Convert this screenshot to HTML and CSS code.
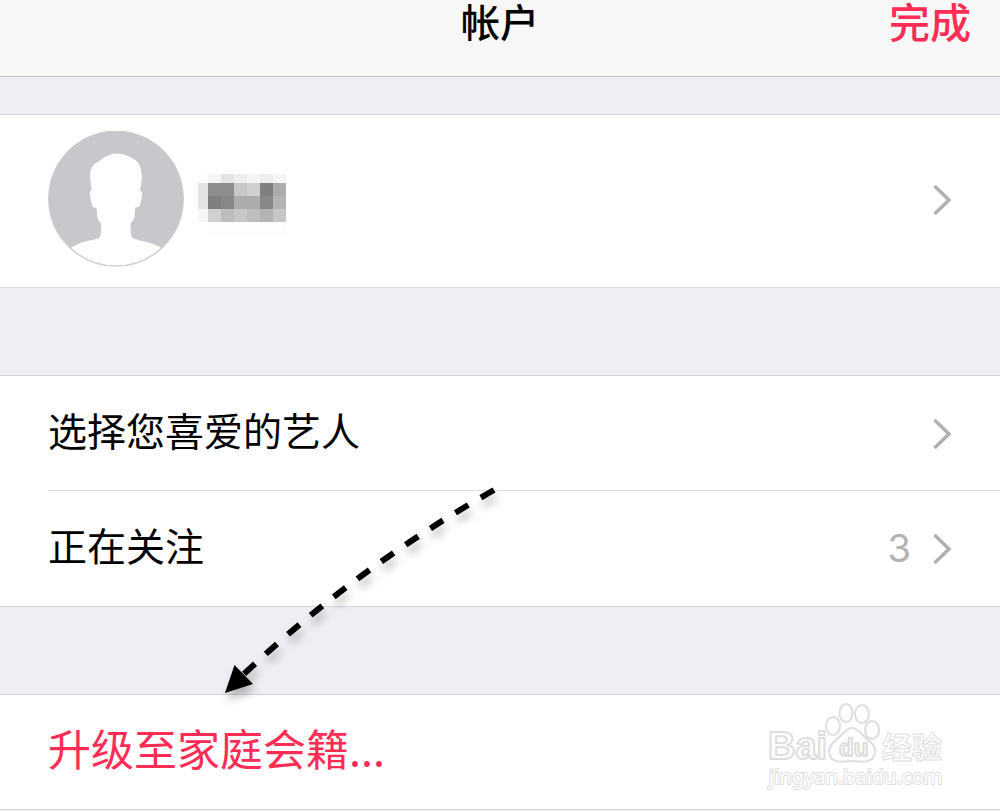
FILE: index.html
```html
<!DOCTYPE html>
<html lang="zh-CN">
<head>
<meta charset="UTF-8">
<meta name="viewport" content="width=device-width, initial-scale=1">
<title>帐户</title>
<link rel="stylesheet" href="styles.css">
</head>
<body>
<header class="navbar">
  <h1 class="title">帐户</h1>
  <button class="done" type="button">完成</button>
</header>

<main>
<section class="group">
  <a class="row profile" href="#" aria-label="个人资料">
    <svg class="avatar" viewBox="0 0 136 136">
      <circle cx="68" cy="68" r="67" fill="#fff" stroke="#d2d2d4" stroke-width="1.5"/>
      <path fill="#c8c7cc" d="M22.500 117A67.500 67.500 0 1 1 113.500 117C109 114 104 112.500 98.500 111C93 109.500 88 109 86 107.500C84 106.500 83 105.500 83 103.500L82.300 93C84 90.500 86 89 86.500 86C87 82 86.500 79 87.500 76.500L90.500 76C93 74 94 66 94 61.500C94 60.500 93 60 92 60C93 54 94 48 93.600 43C93 37 91.500 32.500 88 29.500C86 28 84 27 82 26C77 23.500 73 22.500 68 22.500C63 22.500 60 24.500 57 26C54 27.500 53 28.500 51 30.500C49 31.500 47 32 45.500 34C43 37 42.300 39.500 42.300 43C42.300 49 43 54.500 43.700 60C42.500 59.500 41.700 60 41.700 61.500C42 66 43 72 45 76C46 77 47 76.500 48.300 77C49.500 80 48.700 83 49.300 86C50 89 51.500 91 53.300 92.500L52.800 103C52.500 105.500 51.500 107 50 107.500C45 109 40 109.500 35.500 111C30.500 112.500 26 114.500 22.500 117Z"/>
    </svg>
    <svg class="mosaic" viewBox="0 -11 88 72" shape-rendering="crispEdges">
      <path fill="#fdfdfd" d="M0 0h10v9H0zM10 48h78v13H10z"/>
      <path fill="#f5f5f5" d="M10 0h13v9H10zM49 0h13v9H49zM75 0h13v9H75zM0 35h10v13H0z"/>
      <path fill="#eeeeee" d="M36 0h13v9H36zM62 0h13v9H62z"/>
      <path fill="#e4e4e4" d="M23 0h13v9H23zM0 9h10v26H0z"/>
      <path fill="#8d8d8d" d="M10 9h26v13H10z"/>
      <path fill="#c7c7c7" d="M36 9h13v13H36zM36 35h13v13H36zM75 35h13v13H75z"/>
      <path fill="#d0d0d0" d="M49 9h13v13H49zM10 35h13v13H10z"/>
      <path fill="#7f7f7f" d="M62 9h13v13H62zM10 22h13v13H10z"/>
      <path fill="#878787" d="M23 22h13v13H23zM62 22h13v13H62z"/>
      <path fill="#acacac" d="M75 9h13v13H75zM36 22h26v13H36z"/>
      <path fill="#b4b4b4" d="M75 22h13v13H75zM62 35h13v13H62z"/>
      <path fill="#bdbdbd" d="M23 35h13v13H23zM49 35h13v13H49z"/>
    </svg>
    <svg class="chevron" viewBox="0 0 20 32"><path d="M2.500 2L17 16L2.500 30"/></svg>
  </a>
</section>

<section class="group">
  <a class="row" href="#">
    <span class="label">选择您喜爱的艺人</span>
    <svg class="chevron" viewBox="0 0 20 32"><path d="M2.500 2L17 16L2.500 30"/></svg>
  </a>
  <a class="row inset" href="#">
    <span class="label">正在关注</span>
    <span class="count">3</span>
    <svg class="chevron" viewBox="0 0 20 32"><path d="M2.500 2L17 16L2.500 30"/></svg>
  </a>
</section>

<section class="group">
  <a class="row upgrade" href="#">
    <span class="label">升级至家庭会籍...</span>
  </a>
  <svg class="watermark" viewBox="0 0 190 100">
    <text class="wm-bai" x="3" y="58">Bai</text>
    <g class="wm-paw">
      <ellipse cx="32" cy="25" rx="7" ry="9"/>
      <ellipse cx="45" cy="12" rx="6.500" ry="9"/>
      <ellipse cx="61" cy="13" rx="7" ry="9"/>
      <ellipse cx="71" cy="29" rx="7" ry="9"/>
      <path d="M51 27C58 27 61 35 67 39C73 44 76 48 73 55C70 62 61 61 51 60C41 61 32 62 29 55C26 48 30 44 35 39C41 35 44 27 51 27Z"/>
    </g>
    <text class="wm-du" x="74" y="55">du</text>
    <text class="wm-cn" x="117" y="57">经验</text>
    <text class="wm-url" x="4" y="83">jingyan.baidu.com</text>
  </svg>
</section>
</main>

<svg class="arrow" viewBox="0 0 290 230">
  <path class="arrow-line" d="M284 10Q145 89 34 194"/>
  <path d="M15 213L24.500 185L43 204Z"/>
</svg>
</body>
</html>
```

FILE: styles.css
```css
*{box-sizing:border-box;}
body{
  position:relative;
  margin:0;
  background:#efeef4;
  color:#000;
  font-family:"Noto Sans CJK SC",sans-serif;
  font-size:39px;
}

/* top bar */
.navbar{
  display:grid;
  grid-template-columns:1fr auto 1fr;
  align-items:center;
  padding:0 29px 36px;
  background:#f7f7f7;
  border-bottom:1px solid #c4c4c6;
}
.title{
  grid-column:2;
  margin:0;
  font-size:39px;
  font-weight:500;
  line-height:40px;
}
.done{
  justify-self:end;
  padding:0;
  border:0;
  background:none;
  color:#ff2d55;
  font-family:inherit;
  font-size:41px;
  font-weight:500;
  line-height:40px;
}

/* lists */
.group{
  position:relative;
  margin-top:87px;
  background:#fff;
  border-top:1px solid #d4d3d9;
  border-bottom:1px solid #d9d8dd;
}
.group:first-child{margin-top:37px;}
.row{
  display:flex;
  align-items:center;
  padding:28px 48px;
  color:inherit;
  line-height:58px;
  text-decoration:none;
}
.label{
  flex:1;
  padding-bottom:8px;
  line-height:50px;
}
.inset{
  margin-left:48px;
  padding:28px 48px 29px 0;
  border-top:1px solid #dcdcde;
}
.profile{padding:16px 48px 20px;}
.avatar{width:136px;height:136px;}
.mosaic{width:88px;height:72px;margin-left:14px;}
.chevron{
  width:20px;
  height:32px;
  margin-top:2px;
  fill:none;
  stroke:#b0b0b0;
  stroke-width:3.5;
}
.profile .chevron{margin-left:auto;}
.count{
  margin-right:21px;
  color:#b2b2b2;
  font-family:Inter,sans-serif;
  font-size:38px;
}
.upgrade{
  padding:27px 48px 29px;
  color:#ff2d55;
  font-size:43px;
}

/* dashed pointer over the lists */
.arrow{
  position:absolute;
  top:480px;
  left:210px;
  width:290px;
  height:230px;
  pointer-events:none;
  overflow:visible;
  filter:drop-shadow(2px 7px 4px rgba(0,0,0,.25));
}
.arrow-line{
  fill:none;
  stroke:#000;
  stroke-width:6;
  stroke-dasharray:15 14.6;
}

.watermark{
  position:absolute;
  right:45px;
  bottom:8px;
  width:190px;
  height:100px;
  fill:#fff;
  stroke:#dedede;
  stroke-width:2;
  stroke-linejoin:round;
  pointer-events:none;
}
.wm-bai{font:bold 38px "Liberation Sans",sans-serif;}
.wm-du{font:bold 24px "Liberation Sans",sans-serif;}
.wm-cn{font:bold 30px "Noto Sans CJK SC",sans-serif;stroke-width:1;}
.wm-url{font:20px "Noto Sans",sans-serif;paint-order:stroke;}
.wm-paw{transform:translate(36px,0);}
```
